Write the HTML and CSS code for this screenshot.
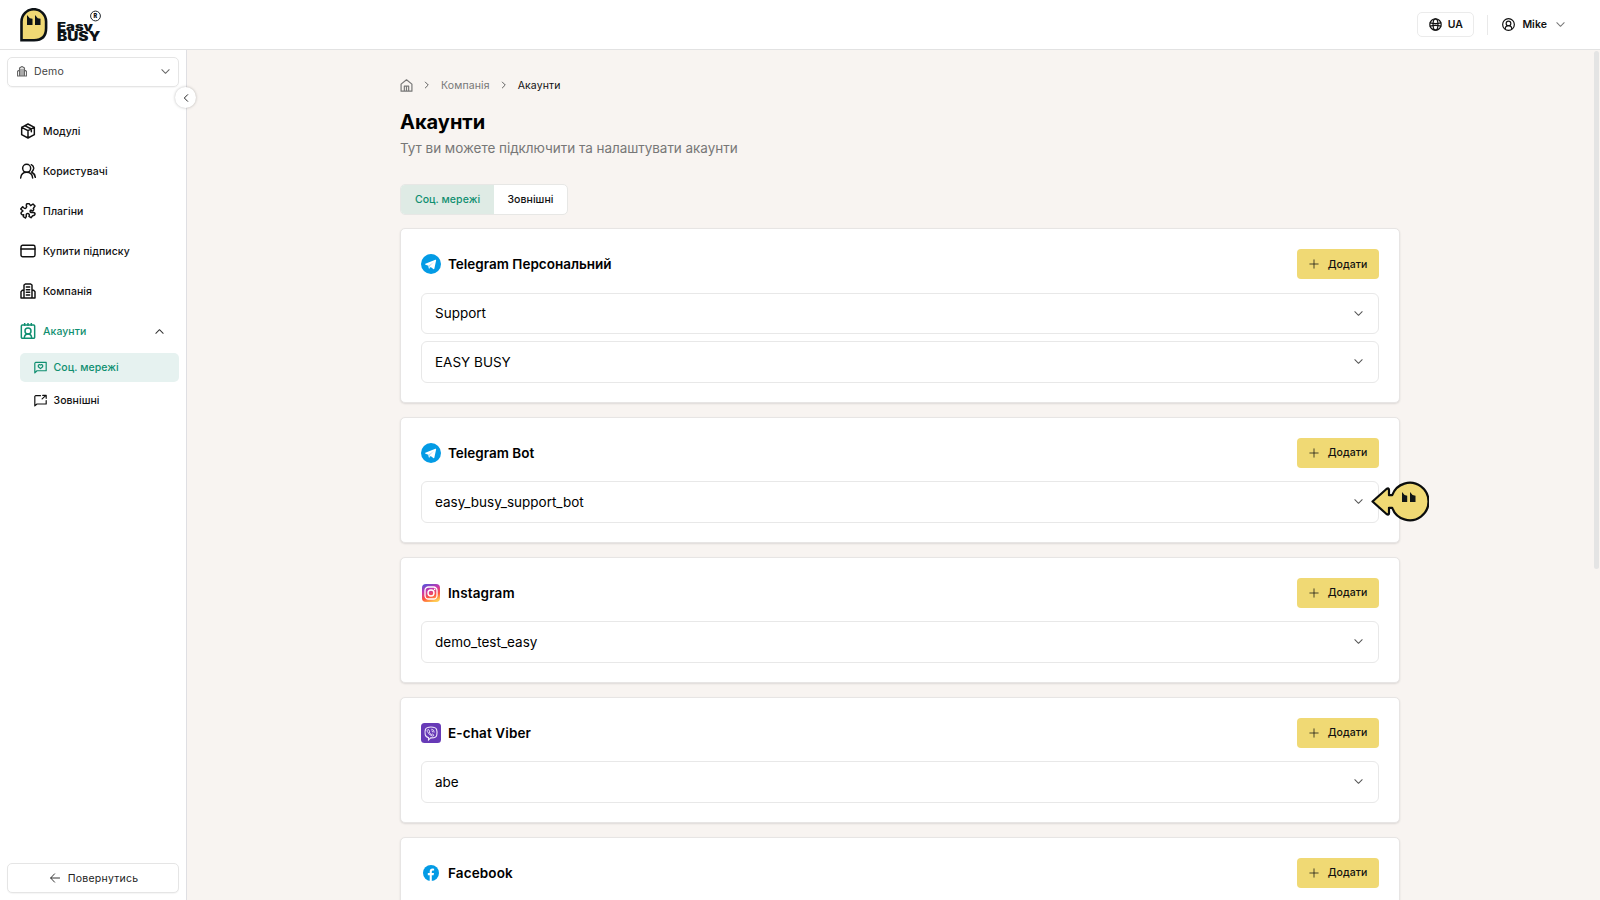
FILE: index.html
```html
<!DOCTYPE html>
<html lang="uk">
<head>
<meta charset="utf-8">
<title>Easy BUSY</title>
<link rel="stylesheet" href="styles.css">
</head>
<body>
<svg class="defs" width="0" height="0">
  <defs>
    <linearGradient id="ig" x1="0.2" y1="0" x2="0.6" y2="1"><stop offset="0" stop-color="#5b51d8"/><stop offset=".35" stop-color="#c837ab"/><stop offset=".7" stop-color="#ff543e"/><stop offset="1" stop-color="#ffcb52"/></linearGradient>
    <symbol id="down" viewBox="0 0 24 24"><path d="m4 8 8 8 8-8"/></symbol>
    <symbol id="right" viewBox="0 0 24 24"><path d="m8 5 7 7-7 7"/></symbol>
    <symbol id="plus" viewBox="0 0 24 24"><path d="M12 2v20M2 12h20"/></symbol>
    <symbol id="telegram" viewBox="0 0 20 20"><circle cx="10" cy="10" r="10" fill="#039be5"/><path fill="#fff" d="M4.300 9.800 14.400 5.800q.9-.2.700.8l-1.700 8q-.3.900-1.100.4l-2.600-1.900-1.300 1.300q-.4.300-.5-.2l-.5-2.500-2.900-.9q-.8-.4-.2-1z"/><path fill="#b0dff7" d="m7.400 11.700 5.800-4-4.500 4.500-.3 2.200q-.5.300-.6-.2z"/></symbol>
  </defs>
</svg>
<header class="top">
  <div class="logo">
    <svg width="28" height="34" viewBox="0 0 28 34"><path d="M1.500 32.200V13.500a12.300 12.300 0 0 1 24.600 0V20q0 12.200-12 12.200z" fill="#f0d974" stroke="#0d1316" stroke-width="2.600"/><path d="M7 7l2.800 3.200 2.700.6V17H7zM15 7l2.800 3.200 2.700.6V17H15z" fill="#0d1316"/></svg>
    <svg width="46" height="36" viewBox="0 0 46 36" class="wordmark"><text x="0" y="22.600" font-size="11.500" textLength="36" lengthAdjust="spacingAndGlyphs">Easy</text><path d="M0 23.300h44v6H0z" fill="#fff"/><text x="0" y="33.200" font-size="12.500" textLength="43.500" lengthAdjust="spacingAndGlyphs">BUSY</text><circle cx="38.500" cy="8" r="4.900" fill="none" stroke="#22272b"/><text x="36.600" y="10.200" font-size="5.500">R</text></svg>
  </div>
  <div class="tools">
    <div class="lang"><svg class="i" width="13" height="13" viewBox="0 0 24 24"><circle cx="12" cy="12" r="10.500"/><ellipse cx="12" cy="12" rx="4.500" ry="10.500"/><path d="M2 9q10 2.500 20 0M2 15q10-2.500 20 0"/></svg><span>UA</span></div>
    <div class="rule"></div>
    <div class="user"><svg class="i" width="13" height="13" viewBox="0 0 24 24"><circle cx="12" cy="12" r="10.800"/><circle cx="12" cy="10" r="4.300"/><path d="M6 20q0-6 6-6t6 6"/></svg><span>Mike</span><svg class="i dim" width="11" height="11"><use href="#down"/></svg></div>
  </div>
</header>
<div class="body">
  <aside class="side">
    <div class="company"><svg class="i" width="10" height="11" viewBox="0 0 20 22"><path d="M5 20V4l5-3 5 3v16zM5 9H3L1 11v9h18v-9l-2-2h-2M8 6v13M12 6v13"/></svg><span>Demo</span><svg class="i chev" width="11" height="11"><use href="#down"/></svg></div>
    <button class="fold"><svg class="i" width="10" height="10" viewBox="0 0 24 24"><path d="m16 4-8 8 8 8"/></svg></button>
    <nav class="nav">
      <a><svg class="i" viewBox="0 0 24 24"><path d="M12 1.500 21.500 6.500v11L12 22.500l-9.500-5v-11zM2.500 6.500 12 11.500l9.500-5M12 11.500v11M7 4l10 5v4"/></svg><span>Модулі</span></a>
      <a><svg class="i" viewBox="0 0 24 24"><circle cx="10" cy="8" r="6"/><path d="M1 22.500Q2 14 10 14t9 8.500M17 2.500q4 2 3.500 6-.5 3-3 5 4.500 2.500 5.500 8"/></svg><span>Користувачі</span></a>
      <a><svg class="i" viewBox="0 0 24 24"><path d="M10 5.500C8 1 12.500-.500 14.500 2L16 4l3.500-2.500 3 3L20 8c1.500 2.500-1 4.500-3 3-2-.5-2.500 2-1 3 2 1 4.500-1 6 1 1.500 2.500-1 4-3 4l-2.500 3-3-2c1.500-3-1-5-3-4s-1 3-1 4l-1.500 2.500-3-2 .5-3c-3 1.500-5-2-3-4l2-1.500-3.500-3 3-3.500C6 8.500 8 8.500 9 7.500z"/></svg><span>Плагіни</span></a>
      <a><svg class="i" viewBox="0 0 24 24"><rect x="1.500" y="3.500" width="21" height="17" rx="2.500"/><path d="M1.500 9h21"/></svg><span>Купити підписку</span></a>
      <a><svg class="i" viewBox="0 0 24 24"><path d="M6 22.500V3l2-1.500h8L18 3v19.500zM6 11H3.500L1.500 13v9.500h21V13l-2-2H18M9.500 6h5M9.500 10h5M9.500 14h5M9.500 18h5"/></svg><span>Компанія</span></a>
      <a class="on"><svg class="i" viewBox="0 0 24 24"><rect x="2" y="3" width="20" height="20" rx="1.500"/><path d="M7 .5v3M12 .5v3M17 .5v3M6.500 23q0-6.500 5.500-6.500t5.500 6.500"/><circle cx="12" cy="12" r="4.500"/></svg><span>Акаунти</span><svg class="i up" width="11" height="11" viewBox="0 0 24 24"><path d="m4 16 8-8 8 8"/></svg></a>
    </nav>
    <nav class="sub">
      <a class="on"><svg class="i" viewBox="0 0 24 24"><path d="M1.500 22V4L3 2.500h19.500V18H5.500z"/><path d="m12 14-4-3.500V8l2-1.500 2 1 2-1L16 8v2.500z"/></svg><span>Соц. мережі</span></a>
      <a><svg class="i" viewBox="0 0 24 24"><path d="M12 3H3L1.500 4.500V22l4-3.500h17V12M15 9l7-6.500M16 2.500h6.500V8"/></svg><span>Зовнішні</span></a>
    </nav>
    <button class="back"><svg class="i" width="10" height="10" viewBox="0 0 24 24"><path d="M23 12H2M11 2 1.500 12l9.500 10"/></svg><span>Повернутись</span></button>
  </aside>
  <main class="main">
    <div class="page">
      <div class="crumbs"><svg class="i" width="13" height="13" viewBox="0 0 24 24"><path d="M2 9.500 12 1.500l10 8V22.500H2zM8 22V13h8v9M12 14v8"/></svg><svg class="i" width="10" height="10"><use href="#right"/></svg><span>Компанія</span><svg class="i" width="10" height="10"><use href="#right"/></svg><span class="cur">Акаунти</span></div>
      <h1>Акаунти</h1>
      <p class="lead">Тут ви можете підключити та налаштувати акаунти</p>
      <div class="tabs"><div class="tab on"><span>Соц. мережі</span></div><div class="tab"><span>Зовнішні</span></div></div>

      <section class="card">
        <div class="head"><svg class="brand"><use href="#telegram"/></svg><h2>Telegram Персональний</h2><button class="add"><svg class="i"><use href="#plus"/></svg><span>Додати</span></button></div>
        <div class="item"><span>Support</span><svg class="i"><use href="#down"/></svg></div>
        <div class="item"><span>EASY BUSY</span><svg class="i"><use href="#down"/></svg></div>
      </section>
      <section class="card">
        <div class="head"><svg class="brand"><use href="#telegram"/></svg><h2>Telegram Bot</h2><button class="add"><svg class="i"><use href="#plus"/></svg><span>Додати</span></button></div>
        <div class="item"><span>easy_busy_support_bot</span><svg class="i"><use href="#down"/></svg></div>
        <svg class="pointer" width="58" height="41" viewBox="0 0 58 41"><path d="M1.500 20.500 15.500 8q2.500-1.500 2.500 1v5.200h3.200A18.700 18.700 0 1 1 21.200 26.800H18V32q0 2.500-2.500 1z" fill="#f0d974" stroke="#0b0d0d" stroke-width="2.200" stroke-linejoin="round"/><path d="m31 11 2.600 3 2.600.8v6.200H31zM39 11l2.600 3 2.900.8v6.200H39z" fill="#111617"/></svg>
      </section>
      <section class="card">
        <div class="head"><svg class="brand" viewBox="0 0 20 20"><rect x="1" y="1" width="18" height="18" rx="4" fill="url(#ig)"/><rect x="4" y="4" width="12" height="12" rx="3.500" fill="none" stroke="#fff" stroke-width="1.300"/><circle cx="10" cy="10" r="3" fill="none" stroke="#fff" stroke-width="1.400"/><circle cx="13.600" cy="6.400" r=".8" fill="#fff"/></svg><h2 class="wide">Instagram</h2><button class="add"><svg class="i"><use href="#plus"/></svg><span>Додати</span></button></div>
        <div class="item"><span>demo_test_easy</span><svg class="i"><use href="#down"/></svg></div>
      </section>
      <section class="card">
        <div class="head"><svg class="brand" viewBox="0 0 20 20"><rect width="20" height="20" rx="3.500" fill="#673ab7"/><path d="M7.500 14.600V17l2.200-2.100q5.800.3 6.100-3.200.5-3.400-.3-5.500Q14.500 4 10 4T4.500 6.200q-.8 2.100-.3 5.200.5 2.700 3.300 3.200z" fill="none" stroke="#efe7fa" stroke-width="1.100"/><path d="M7 6.400q-1.300.7-.7 2 1.400 3.300 5 4.700 1.200.1 1.600-1l-1.700-1.200-.9.700Q8.800 10.800 8.200 9l.7-.9zM10.300 6.200q2.900.2 2.900 3.300M10.500 7.800q1.200.2 1.300 1.500" fill="none" stroke="#efe7fa" stroke-width=".9"/></svg><h2 class="wide">E-chat Viber</h2><button class="add"><svg class="i"><use href="#plus"/></svg><span>Додати</span></button></div>
        <div class="item"><span>abe</span><svg class="i"><use href="#down"/></svg></div>
      </section>
      <section class="card last">
        <div class="head"><svg class="brand" viewBox="0 0 20 20"><circle cx="10" cy="10" r="8" fill="#039be5"/><path d="M8.700 18v-5.800H6.800v-2.100h1.900V8.600q0-3 2.900-3 .8 0 1.500.2v1.800h-1.100q-1.200 0-1.200 1.100v1.400h2.200l-.4 2.100h-1.800V18z" fill="#fff"/></svg><h2 class="wide">Facebook</h2><button class="add"><svg class="i"><use href="#plus"/></svg><span>Додати</span></button></div>
      </section>
    </div>
    <div class="thumb"></div>
  </main>
</div>
</body>
</html>
```
FILE: styles.css
```css
* { box-sizing: border-box; }
body { margin: 0; height: 900px; overflow: hidden; display: flex; flex-direction: column; background: #fff; color: #111; font: 500 10.5px/16px Inter, "Noto Sans", sans-serif; letter-spacing: .06px; }
.defs { position: absolute; }
button { font: inherit; letter-spacing: inherit; color: inherit; border: 0; padding: 0; }
.i { fill: none; stroke: currentColor; stroke-width: 2.2; stroke-linecap: round; stroke-linejoin: round; flex: none; }
.tools span, .side span, .crumbs span, .tab span, .add span { padding-top: 1px; }

.top { height: 50px; flex: none; border-bottom: 1px solid #e2e2e2; display: flex; justify-content: space-between; padding: 0 34px 0 20px; }
.logo { display: flex; gap: 9px; padding-top: 8px; }
.wordmark { font-weight: 900; fill: #0d1316; letter-spacing: 0; }
.tools { display: flex; align-items: center; font-weight: 600; }
.lang { width: 57px; height: 25px; border: 1px solid #ebebeb; border-radius: 5px; display: flex; align-items: center; justify-content: center; gap: 6px; }
.rule { width: 1px; height: 20px; background: #e9e9e9; margin: 0 14px 0 13px; }
.user { display: flex; align-items: center; gap: 7px; }
.user .dim { margin-left: 1px; color: #777; }

.body { flex: 1; display: flex; min-height: 0; }
.side { position: relative; width: 187px; flex: none; border-right: 1px solid #dfdfe3; padding: 7px; display: flex; flex-direction: column; }
.company { height: 30px; width: 172px; border: 1px solid #e5e5e5; border-radius: 5px; display: flex; align-items: center; padding: 0 7px 1px 9px; gap: 7px; font-weight: 400; letter-spacing: .2px; color: #444; box-shadow: 0 1px 1px #0000000a; }
.company .i { color: #666; }
.company .chev { margin-left: auto; }
.fold { position: absolute; right: -10px; top: 37px; width: 21px; height: 21px; border-radius: 50%; background: #fff; box-shadow: 0 0 3px #0004; display: flex; align-items: center; justify-content: center; z-index: 2; }
.nav { padding: 24px 0 0 13px; display: flex; flex-direction: column; }
.nav a { height: 40px; display: flex; align-items: center; gap: 7px; }
.nav a > svg:first-child { width: 16px; height: 16px; }
.nav .up { margin-left: auto; margin-right: 14px; color: #333; }
.on { color: #0f8f70; }
.sub { padding: 2px 0 0 13px; }
.sub a { width: 159px; height: 29px; border-radius: 5px; display: flex; align-items: center; gap: 7px; padding-left: 13.5px; margin-bottom: 3.5px; }
.sub a.on { background: #e6f2f0; }
.sub svg { width: 13px; height: 13px; }
.back { margin-top: auto; height: 30px; width: 172px; border: 1px solid #e5e5e5; border-radius: 5px; background: #fff; display: flex; align-items: center; justify-content: center; gap: 8px; padding-left: 2px; font-weight: 400; letter-spacing: .25px; color: #222; box-shadow: 0 1px 1px #0000000a; }

.main { position: relative; flex: 1; background: #f8f4f1; overflow: hidden; display: flex; justify-content: center; }
.page { width: 1000px; margin-left: 13px; flex: none; padding-top: 27px; }
.crumbs { height: 16px; display: flex; align-items: center; gap: 9px; font-weight: 400; letter-spacing: .12px; color: #777; }
.crumbs .i:nth-of-type(n+2) { color: #555; }
.crumbs .cur { color: #111; }
h1 { margin: 15px 0 0; font-size: 20px; line-height: 28px; font-weight: 700; letter-spacing: 0; color: #000; }
.lead { margin: 2px 0 0; font-size: 13.5px; line-height: 20px; font-weight: 400; letter-spacing: -.04px; color: #777; }
.tabs { display: flex; width: 168px; height: 31px; margin: 26px 0 13px; border: 1px solid #e7e7e5; border-radius: 5px; background: #fff; overflow: hidden; }
.tab { flex: 1; display: flex; align-items: center; justify-content: center; }
.tab.on { flex: none; width: 93px; background: #dfebe5; }
.card { position: relative; background: #fff; border: 1px solid #e7e5e4; border-radius: 5px; padding: 20px 20px 19.5px; margin-bottom: 13.5px; box-shadow: 0 1px 2px #0000001c; display: flex; flex-direction: column; gap: 7px; }
.card.last { height: 127px; }
.head { display: flex; align-items: center; height: 30px; margin-bottom: 6.5px; }
.brand { width: 20px; height: 20px; margin-right: 7px; }
h2 { margin: 0; font-size: 13.5px; line-height: 20px; font-weight: 600; letter-spacing: 0; color: #000; }
h2.wide { letter-spacing: .12px; }
.add { margin-left: auto; width: 82px; height: 30px; border-radius: 4px; background: #f0d974; display: flex; align-items: center; justify-content: center; gap: 9px; letter-spacing: .06px; }
.add .i { width: 10px; height: 10px; stroke-width: 1.8; }
.item { height: 41.5px; border: 1px solid #e8e8e8; border-radius: 6px; display: flex; align-items: center; justify-content: space-between; padding: 0 14px 0 13px; font-size: 13.5px; font-weight: 400; letter-spacing: 0; color: #000; }
.item .i { width: 11px; height: 11px; color: #555; }
.pointer { position: absolute; left: 970px; top: 63.5px; z-index: 1; }
.thumb { position: absolute; right: 1px; top: 1px; width: 5px; height: 518px; border-radius: 3px; background: #e4e4e4; }
```
